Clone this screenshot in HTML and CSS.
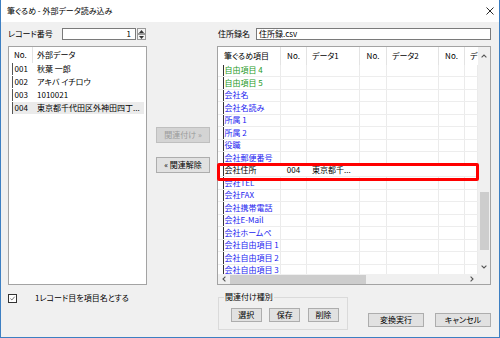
FILE: index.html
```html
<!DOCTYPE html>
<html lang="ja">
<head>
<meta charset="utf-8">
<title>筆ぐるめ - 外部データ読み込み</title>
<link rel="stylesheet" href="styles.css">
</head>
<body>
<div class="window">
  <div class="titlebar">
    <span class="title">筆ぐるめ - 外部データ読み込み</span>
    <svg class="close" viewBox="0 0 8 8"><path d="M0.5 0.5 L7.5 7.5 M7.5 0.5 L0.5 7.5" stroke="#111" stroke-width="0.9" fill="none"/></svg>
  </div>
  <div class="body">
    <div class="col-left">
      <div class="field-row">
        <span class="label label-rec">レコード番号</span>
        <div class="spin-input">1</div>
        <div class="spin-btns">
          <span class="spin-btn"><svg viewBox="0 0 5 3"><path d="M0 3 L2.5 0 L5 3Z" fill="#333"/></svg></span>
          <span class="spin-btn"><svg viewBox="0 0 5 3"><path d="M0 0 L2.5 3 L5 0Z" fill="#333"/></svg></span>
        </div>
      </div>
      <div class="list">
        <div class="list-head"><span class="c-no">No.</span><span class="c-data">外部データ</span></div>
        <div class="list-row"><span class="c-no">001</span><span class="c-data">秋葉 一郎</span></div>
        <div class="list-row"><span class="c-no">002</span><span class="c-data">アキバ イチロウ</span></div>
        <div class="list-row"><span class="c-no">003</span><span class="c-data">1010021</span></div>
        <div class="list-row list-row-hl"><span class="c-no">004</span><span class="c-data">東京都千代田区外神田四丁...</span></div>
      </div>
      <div class="check-row">
        <span class="checkbox"><svg viewBox="0 0 9 9"><path d="M1.8 4.6 L3.7 6.4 L7.3 2.2" stroke="#333" stroke-width="0.9" fill="none"/></svg></span>
        <span class="check-label">1レコード目を項目名とする</span>
      </div>
    </div>

    <div class="col-mid">
      <div class="btn btn-mid btn-disabled">関連付け »</div>
      <div class="btn btn-mid">« 関連解除</div>
    </div>

    <div class="col-right">
      <div class="field-row">
        <span class="label label-file">住所録名</span>
        <div class="text-input">住所録.csv</div>
      </div>
      <div class="grid">
        <div class="grid-view">
          <div class="g-row g-head">
            <span class="g-c g-c1">筆ぐるめ項目</span>
            <span class="g-c g-num">No.</span>
            <span class="g-c g-c3">データ1</span>
            <span class="g-c g-num">No.</span>
            <span class="g-c g-c5">データ2</span>
            <span class="g-c g-num">No.</span>
            <span class="g-c g-c7">データ</span>
          </div>
          <div class="g-row green"><span class="g-c g-name">自由項目 4</span><span class="g-c"></span><span class="g-c"></span><span class="g-c"></span><span class="g-c"></span><span class="g-c"></span><span class="g-c"></span></div>
          <div class="g-row green"><span class="g-c g-name">自由項目 5</span><span class="g-c"></span><span class="g-c"></span><span class="g-c"></span><span class="g-c"></span><span class="g-c"></span><span class="g-c"></span></div>
          <div class="g-row blue"><span class="g-c g-name">会社名</span><span class="g-c"></span><span class="g-c"></span><span class="g-c"></span><span class="g-c"></span><span class="g-c"></span><span class="g-c"></span></div>
          <div class="g-row blue"><span class="g-c g-name">会社名読み</span><span class="g-c"></span><span class="g-c"></span><span class="g-c"></span><span class="g-c"></span><span class="g-c"></span><span class="g-c"></span></div>
          <div class="g-row blue"><span class="g-c g-name">所属 1</span><span class="g-c"></span><span class="g-c"></span><span class="g-c"></span><span class="g-c"></span><span class="g-c"></span><span class="g-c"></span></div>
          <div class="g-row blue"><span class="g-c g-name">所属 2</span><span class="g-c"></span><span class="g-c"></span><span class="g-c"></span><span class="g-c"></span><span class="g-c"></span><span class="g-c"></span></div>
          <div class="g-row blue"><span class="g-c g-name">役職</span><span class="g-c"></span><span class="g-c"></span><span class="g-c"></span><span class="g-c"></span><span class="g-c"></span><span class="g-c"></span></div>
          <div class="g-row blue"><span class="g-c g-name">会社郵便番号</span><span class="g-c"></span><span class="g-c"></span><span class="g-c"></span><span class="g-c"></span><span class="g-c"></span><span class="g-c"></span></div>
          <div class="g-row sel"><span class="g-c g-name">会社住所</span><span class="g-c g-num">004</span><span class="g-c g-c3 g-over">東京都千...</span><span class="g-c"></span><span class="g-c"></span><span class="g-c"></span><span class="g-c"></span></div>
          <div class="g-row blue"><span class="g-c g-name">会社TEL</span><span class="g-c"></span><span class="g-c"></span><span class="g-c"></span><span class="g-c"></span><span class="g-c"></span><span class="g-c"></span></div>
          <div class="g-row blue"><span class="g-c g-name">会社FAX</span><span class="g-c"></span><span class="g-c"></span><span class="g-c"></span><span class="g-c"></span><span class="g-c"></span><span class="g-c"></span></div>
          <div class="g-row blue"><span class="g-c g-name">会社携帯電話</span><span class="g-c"></span><span class="g-c"></span><span class="g-c"></span><span class="g-c"></span><span class="g-c"></span><span class="g-c"></span></div>
          <div class="g-row blue"><span class="g-c g-name">会社E-Mail</span><span class="g-c"></span><span class="g-c"></span><span class="g-c"></span><span class="g-c"></span><span class="g-c"></span><span class="g-c"></span></div>
          <div class="g-row blue"><span class="g-c g-name">会社ホームペ</span><span class="g-c"></span><span class="g-c"></span><span class="g-c"></span><span class="g-c"></span><span class="g-c"></span><span class="g-c"></span></div>
          <div class="g-row blue"><span class="g-c g-name">会社自由項目 1</span><span class="g-c"></span><span class="g-c"></span><span class="g-c"></span><span class="g-c"></span><span class="g-c"></span><span class="g-c"></span></div>
          <div class="g-row blue"><span class="g-c g-name">会社自由項目 2</span><span class="g-c"></span><span class="g-c"></span><span class="g-c"></span><span class="g-c"></span><span class="g-c"></span><span class="g-c"></span></div>
          <div class="g-row blue"><span class="g-c g-name">会社自由項目 3</span><span class="g-c"></span><span class="g-c"></span><span class="g-c"></span><span class="g-c"></span><span class="g-c"></span><span class="g-c"></span></div>
        </div>
        <div class="vscroll">
          <span class="sb-btn sb-up"><svg viewBox="0 0 6 4"><path d="M0.6 3.4 L3 1 L5.4 3.4" stroke="#555" stroke-width="1.1" fill="none"/></svg></span>
          <span class="sb-track"><span class="v-thumb"></span></span>
          <span class="sb-btn sb-down"><svg viewBox="0 0 6 4"><path d="M0.6 0.6 L3 3 L5.4 0.6" stroke="#555" stroke-width="1.1" fill="none"/></svg></span>
        </div>
        <div class="hscroll">
          <span class="sb-btn sb-h"><svg viewBox="0 0 4 6"><path d="M3.4 0.6 L1 3 L3.4 5.4" stroke="#555" stroke-width="1.1" fill="none"/></svg></span>
          <span class="h-track"><span class="h-thumb"></span></span>
          <span class="sb-btn sb-h"><svg viewBox="0 0 4 6"><path d="M0.6 0.6 L3 3 L0.6 5.4" stroke="#555" stroke-width="1.1" fill="none"/></svg></span>
        </div>
        <div class="corner"></div>
        <div class="callout"></div>
      </div>
      <div class="bottom-row">
        <fieldset class="group">
          <legend>関連付け種別</legend>
          <div class="group-btns">
            <div class="btn btn-sm">選択</div>
            <div class="btn btn-sm">保存</div>
            <div class="btn btn-sm">削除</div>
          </div>
        </fieldset>
        <div class="actions">
          <div class="btn btn-act">変換実行</div>
          <div class="btn btn-act">キャンセル</div>
        </div>
      </div>
    </div>
  </div>
</div>
</body>
</html>
```

FILE: styles.css
```css
* { box-sizing: border-box; }
html, body { margin: 0; padding: 0; }
body {
  width: 500px;
  height: 338px;
  overflow: hidden;
  font-family: "Noto Sans CJK JP", "Noto Sans", sans-serif;
  font-size: 8px;
  line-height: 10px;
  font-feature-settings: "palt";
  color: #000;
  background: #fff;
}
.window {
  width: 500px;
  height: 338px;
  border: 1px solid #3d7fc2;
  border-top: none;
  display: flex;
  flex-direction: column;
  background: #f0f0f0;
}
.titlebar {
  height: 22px;
  flex: none;
  background: #fff;
  display: flex;
  align-items: center;
  padding: 0 5px 0 6px;
}
.title { flex: 1; }
.close { width: 8px; height: 8px; display: block; }

.body {
  flex: 1;
  display: flex;
  padding: 6px 8px 0 7px;
}
.col-left { width: 139px; display: flex; flex-direction: column; }
.col-mid {
  width: 70px;
  display: flex;
  flex-direction: column;
  align-items: flex-start;
  padding: 99px 0 0 9px;
  gap: 14px;
}
.col-right { width: 274px; display: flex; flex-direction: column; }

.field-row {
  height: 12px;
  display: flex;
  align-items: stretch;
  margin-bottom: 6px;
}
.label { display: flex; align-items: center; }
.label-rec { width: 54px; }
.label-file { width: 39px; padding-left: 1px; }
.spin-input {
  width: 74px;
  background: #fff;
  border: 1px solid #7a7a7a;
  text-align: right;
  padding-right: 4px;
  line-height: 10px;
}
.spin-btns {
  width: 9px;
  margin-left: 1px;
  display: flex;
  flex-direction: column;
  gap: 0;
}
.spin-btn {
  flex: 1;
  border: 1px solid #9a9a9a;
  background: #f4f4f4;
  display: flex;
  align-items: center;
  justify-content: center;
}
.spin-btn svg { width: 5px; height: 3px; display: block; }
.text-input {
  flex: 1;
  margin-left: 0;
  background: #fff;
  border: 1px solid #7a7a7a;
  padding-left: 2px;
  line-height: 10px;
}

/* left list */
.list {
  height: 239px;
  background: #fff;
  border: 1px solid #a3a3a3;
}
.list-head { height: 16px; display: flex; }
.list-head .c-no {
  width: 24px;
  padding-left: 5px;
  border-right: 1px solid #e3e3e3;
  display: flex;
  align-items: center;
}
.list-head .c-data { padding-left: 4px; display: flex; align-items: center; }
.list-row {
  height: 13px;
  margin: 0 2px 0 3px;
  display: flex;
  border-bottom: 1px solid #fff;
}
.list-row .c-no {
  width: 21px;
  border-left: 1.5px solid #555;
  padding-left: 1.5px;
  display: flex;
  align-items: center;
}
.list-row .c-data { padding-left: 4px; display: flex; align-items: center; white-space: nowrap; }
.list-row-hl { background: #ebebeb; }

.check-row {
  margin-top: 8px;
  height: 10px;
  display: flex;
  align-items: center;
}
.checkbox {
  width: 9px;
  height: 9px;
  border: 1px solid #333;
  background: #fff;
  margin-left: 0;
  display: flex;
}
.checkbox svg { width: 7px; height: 7px; display: block; }
.check-label { margin-left: 18px; }

/* buttons */
.btn {
  display: flex;
  align-items: center;
  justify-content: center;
  background: #e1e1e1;
  border: 1px solid #adadad;
  white-space: nowrap;
}
.btn-mid { width: 54px; height: 16px; }
.btn-disabled { background: #d4d4d4; border-color: #bfbfbf; color: #9b9b9b; }
.btn-sm { width: 31px; height: 13.5px; }
.btn-act { width: 56px; height: 14px; }

/* grid */
.grid {
  position: relative;
  height: 239px;
  border: 1px solid #a3a3a3;
  background: #fff;
  display: grid;
  grid-template-columns: 260px 12px;
  grid-template-rows: 227px 10px;
}
.grid-view { overflow: hidden; grid-column: 1; grid-row: 1; }
.g-row {
  display: grid;
  grid-template-columns: 63px 26px 53px 27px 52px 26px 13px;
  height: 12.5px;
  border-bottom: 1px solid #ededed;
}
.g-head { height: 17.5px; border-bottom: none; }
.g-c {
  border-right: 1px solid #ebebeb;
  display: flex;
  align-items: center;
  white-space: nowrap;
  overflow: hidden;
}
.g-head .g-c { border-right-color: #e3e3e3; }
.g-c1 { padding-left: 6px; }
.g-num { justify-content: center; }
.g-c3, .g-c5 { padding-left: 5px; }
.g-c7 { padding-left: 5px; border-right: none; }
.g-name {
  margin-left: 5px;
  border-left: 1.5px solid #333;
  padding-left: 0.5px;
}
.green { color: #1f9a1f; }
.blue { color: #1c1cf0; }
.sel { color: #000; }
.sel .g-c { border-right-color: transparent; }
.g-over { overflow: visible; }

.vscroll {
  grid-column: 2;
  grid-row: 1;
  background: #f0f0f0;
  display: flex;
  flex-direction: column;
}
.sb-btn { display: flex; align-items: center; justify-content: center; flex: none; }
.sb-up { height: 17px; }
.sb-down { height: 14px; }
.sb-up svg, .sb-down svg { width: 6px; height: 4px; display: block; }
.sb-track { flex: 1; display: flex; flex-direction: column; align-items: center; }
.v-thumb { width: 9px; height: 58px; margin-top: 127.7px; background: #cdcdcd; }
.hscroll {
  grid-column: 1;
  grid-row: 2;
  background: #f0f0f0;
  display: flex;
}
.sb-h { width: 12px; }
.sb-h svg { width: 4px; height: 6px; display: block; }
.h-track { flex: 1; display: flex; align-items: center; }
.h-thumb { width: 136px; height: 9px; background: #cdcdcd; }
.corner { grid-column: 2; grid-row: 2; background: #f0f0f0; }

.callout {
  position: absolute;
  left: -1px;
  top: 115.7px;
  width: 262px;
  height: 18px;
  border: 3px solid #ff0000;
  border-radius: 2px;
}

/* bottom */
.bottom-row {
  display: flex;
  align-items: flex-start;
  margin-top: 7px;
}
.group {
  margin: 0 0 0 1px;
  width: 130px;
  height: 38px;
  padding: 0;
  border: 1px solid #dadada;
}
.group legend {
  padding: 0 1px;
  margin-left: 5px;
  line-height: 10px;
}
.group-btns {
  display: flex;
  gap: 7.6px;
  padding: 6px 0 0 11.7px;
}
.actions {
  display: flex;
  gap: 11px;
  margin: 20.7px 0 0 20px;
}
```
